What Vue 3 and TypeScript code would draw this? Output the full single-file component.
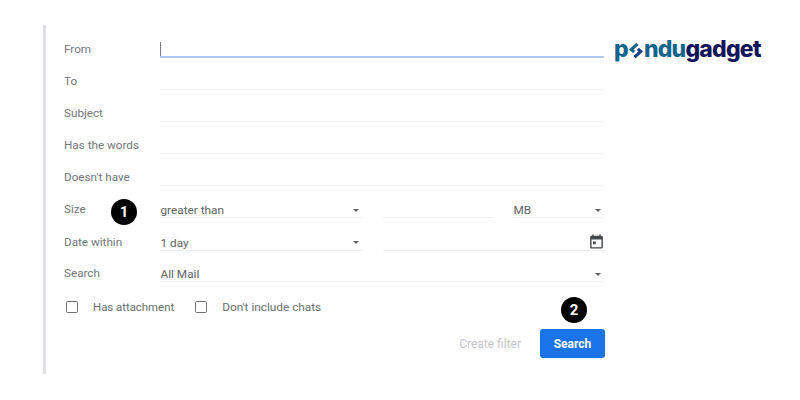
<script setup lang="ts">
const textRows: { label: string; active?: boolean }[] = [
  { label: 'From', active: true },
  { label: 'To' },
  { label: 'Subject' },
  { label: 'Has the words' },
  { label: "Doesn't have" },
]
</script>

<template>
  <div class="page">
    <div class="panel">
      <div v-for="row in textRows" :key="row.label" class="row">
        <span class="label">{{ row.label }}</span>
        <div class="field" :class="{ active: row.active }"><i v-if="row.active" class="caret"></i></div>
      </div>

      <div class="row">
        <span class="label">Size</span>
        <div class="field-group">
          <div class="field select wide"><span>greater than</span><i class="arrow"></i></div>
          <div class="field mid"></div>
          <div class="field select unit"><span>MB</span><i class="arrow"></i></div>
        </div>
      </div>

      <div class="row">
        <span class="label">Date within</span>
        <div class="field-group date-group">
          <div class="field select wide"><span>1 day</span><i class="arrow"></i></div>
          <div class="field date">
            <svg width="17" height="17" viewBox="0 0 24 24" fill="#46494d">
              <path d="M19 4h-1V2h-2v2H8V2H6v2H5c-1.1 0-2 .9-2 2v14c0 1.1.9 2 2 2h14c1.1 0 2-.9 2-2V6c0-1.1-.9-2-2-2zm0 16H5V9h14v11zM7 12h4v4H7v-4z" />
            </svg>
          </div>
        </div>
      </div>

      <div class="row">
        <span class="label">Search</span>
        <div class="field select"><span>All Mail</span><i class="arrow"></i></div>
      </div>

      <div class="checks">
        <label class="check"><i class="box"></i><span>Has attachment</span></label>
        <label class="check"><i class="box"></i><span>Don't include chats</span></label>
      </div>

      <div class="actions">
        <span class="create">Create filter</span>
        <button class="search" type="button">Search</button>
      </div>

      <span class="badge badge-one">1</span>
      <span class="badge badge-two">2</span>
    </div>

    <div class="logo">
      <span class="teal">p</span><svg class="logo-mark" width="16" height="17" viewBox="0 0 17 17" fill="none">
        <path d="M10 1.500 3.500 7.500l3 2.800" stroke="#14648c" stroke-width="3.200" />
        <path d="M10.500 6.800l3 2.700-6.500 6" stroke="#12408a" stroke-width="3.200" />
      </svg><span class="teal">ndu</span><span class="navy">gadget</span>
    </div>
  </div>
</template>

<style>
html,
body {
  margin: 0;
  background: #fff;
}
</style>

<style scoped>
.page {
  position: relative;
  width: 800px;
  height: 400px;
  overflow: hidden;
  padding: 25px 0 0 43px;
  box-sizing: border-box;
  background: #fff;
  font-family: Roboto, "Liberation Sans", sans-serif;
  font-size: 11.8px;
  color: #5f6368;
}

.panel {
  position: relative;
  width: 562px;
  height: 349px;
  box-sizing: border-box;
  border-left: 3px solid #dfe0e3;
  padding: 1px 0 0 18px;
}

.row {
  display: grid;
  grid-template-columns: 96px 444px;
  height: 32px;
  align-items: stretch;
}

.label {
  align-self: end;
  height: 15px;
  padding-bottom: 1px;
  font-size: 11.7px;
  line-height: 15px;
  color: #73777b;
}

.field {
  position: relative;
  box-sizing: border-box;
  display: flex;
  align-items: center;
  justify-content: space-between;
  padding-top: 17px;
  border-bottom: 1px solid #eff0f1;
  color: #5f6368;
}

.field.active {
  border-bottom: 2px solid #b0c8f3;
}

.caret {
  position: absolute;
  left: 0;
  top: 16px;
  width: 1px;
  height: 14px;
  background: #7b7f83;
}

.field-group {
  display: grid;
  grid-template-columns: 203px 110px 91px;
  column-gap: 20px;
}

.field-group.date-group {
  grid-template-columns: 203px 221px;
}

.select span {
  padding-left: 0.5px;
}

.select .arrow {
  width: 0;
  height: 0;
  margin-right: 3px;
  border-left: 3.5px solid transparent;
  border-right: 3.5px solid transparent;
  border-top: 3.5px solid #5f6368;
}

.wide .arrow {
  margin-right: 4px;
}

.date {
  justify-content: flex-end;
  padding-top: 15px;
}

.date svg {
  margin-right: -1px;
}

.checks {
  display: flex;
  gap: 21px;
  height: 16px;
  margin-top: 17px;
  padding-left: 2px;
}

.check {
  display: flex;
  align-items: center;
  gap: 15px;
  font-size: 11.4px;
  color: #6b6f73;
}

.check + .check {
  font-size: 11.8px;
}

.box {
  width: 10px;
  height: 10px;
  border: 1.5px solid #6b6f73;
  border-radius: 1.5px;
}

.actions {
  display: flex;
  justify-content: flex-end;
  align-items: center;
  gap: 19px;
  width: 541px;
  margin-top: 14px;
}

.create {
  font-size: 12px;
  color: #c4c5c7;
}

.search {
  width: 65px;
  height: 29px;
  border: 0;
  padding: 0;
  border-radius: 3px;
  background: #1a73e8;
  color: #fff;
  font: 700 12px Roboto, "Liberation Sans", sans-serif;
}

.badge {
  position: absolute;
  width: 26px;
  height: 26px;
  border-radius: 50%;
  background: #000;
  color: #fff;
  font-size: 15px;
  font-weight: 700;
  line-height: 26px;
  text-align: center;
}

.badge-one {
  left: 65px;
  top: 174px;
}

.badge-two {
  left: 515px;
  top: 272px;
}

.logo {
  position: absolute;
  left: 614px;
  top: 35px;
  display: flex;
  align-items: baseline;
  height: 28px;
  font-family: Inter, Lato, sans-serif;
  font-size: 23px;
  font-weight: 800;
  line-height: 28px;
  letter-spacing: -0.8px;
}

.logo-mark {
  align-self: center;
  margin: 3px 0 0 0;
}

.teal {
  color: #14648c;
}

.navy {
  color: #14145a;
}
</style>
